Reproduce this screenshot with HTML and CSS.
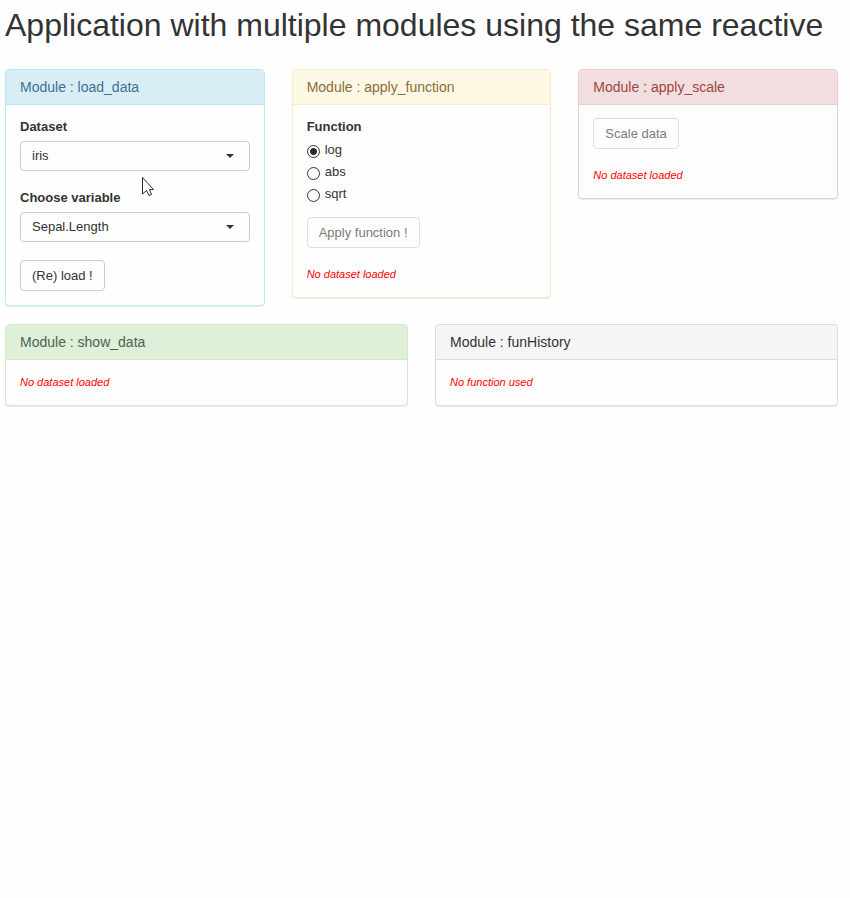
FILE: index.html
```html
<!DOCTYPE html>
<html lang="en">
<head>
<meta charset="utf-8">
<meta name="viewport" content="width=device-width, initial-scale=1">
<title>Application with multiple modules</title>
<link rel="stylesheet" href="styles.css">
</head>
<body>
<h1>Application with multiple modules using the same reactive</h1>
<main>
  <div class="row">
    <section class="panel info">
      <h2 class="panel-heading">Module : load_data</h2>
      <div class="panel-body">
        <div class="form-group">
          <label class="field-label" for="dataset">Dataset</label>
          <div class="select-wrap"><select id="dataset"><option>iris</option></select></div>
        </div>
        <div class="form-group">
          <label class="field-label" for="variable">Choose variable</label>
          <div class="select-wrap"><select id="variable"><option>Sepal.Length</option></select></div>
        </div>
        <button type="button" class="btn">(Re) load !</button>
      </div>
    </section>
    <section class="panel warning">
      <h2 class="panel-heading">Module : apply_function</h2>
      <div class="panel-body">
        <fieldset>
          <legend class="field-label">Function</legend>
          <label class="radio"><input type="radio" name="fun" checked>log</label>
          <label class="radio"><input type="radio" name="fun">abs</label>
          <label class="radio"><input type="radio" name="fun">sqrt</label>
        </fieldset>
        <button type="button" class="btn" disabled>Apply function !</button>
        <p class="status">No dataset loaded</p>
      </div>
    </section>
    <section class="panel danger">
      <h2 class="panel-heading">Module : apply_scale</h2>
      <div class="panel-body">
        <button type="button" class="btn" disabled>Scale data</button>
        <p class="status">No dataset loaded</p>
      </div>
    </section>
  </div>
  <div class="row">
    <section class="panel success">
      <h2 class="panel-heading">Module : show_data</h2>
      <div class="panel-body"><p class="status">No dataset loaded</p></div>
    </section>
    <section class="panel default">
      <h2 class="panel-heading">Module : funHistory</h2>
      <div class="panel-body"><p class="status">No function used</p></div>
    </section>
  </div>
</main>
<svg class="pointer" width="13" height="20" viewBox="0 0 13 20" aria-hidden="true">
  <path d="M0.500 0.500V17L4.500 13.500L7 18.500L9.500 17.500L7.500 12.500H11.500Z" fill="#fff" stroke="#2b2b38" stroke-linejoin="round"/>
</svg>
</body>
</html>
```
FILE: styles.css
```css
* { box-sizing: border-box; }

body {
  margin: 0;
  padding: 6px 12px 0 5px;
  background: #fefefe;
  color: #333;
  font: 13px/18px "Liberation Sans", Arial, sans-serif;
}

h1 {
  margin: 0 0 25px;
  font-size: 32px;
  line-height: 38px;
  font-weight: 400;
  white-space: nowrap;
}

.row {
  display: flex;
  align-items: flex-start;
  gap: 27px;
  margin-bottom: 18px;
}

.panel {
  flex: 1 1 0;
  min-width: 0;
  border: 1px solid var(--line);
  border-radius: 4px;
  background: #fefefe;
  box-shadow: 0 1px 1px rgba(0, 0, 0, 0.08);
}

.panel-heading {
  margin: 0;
  padding: 8px 14px;
  border-bottom: 1px solid var(--line);
  border-radius: 3px 3px 0 0;
  background: var(--fill);
  color: var(--ink);
  font-size: 14px;
  line-height: 18px;
  font-weight: 400;
}

.panel-body { padding: 13px 14px 14px; }

.info { --line: #bce8f1; --fill: #d9edf7; --ink: #41708f; }
.warning { --line: #faebcc; --fill: #fcf8e3; --ink: #8a6d3b; }
.danger { --line: #ebccd1; --fill: #f2dede; --ink: #a04442; }
.success { --line: #d6e9c6; --fill: #dff0d8; --ink: #4a6350; }
.default { --line: #ddd; --fill: #f5f5f5; --ink: #333; }

.field-label {
  display: block;
  margin-bottom: 5px;
  padding: 0;
  font-weight: 700;
}

.form-group { margin-bottom: 18px; }

.select-wrap { position: relative; }

.select-wrap::after {
  content: "";
  position: absolute;
  top: 13px;
  right: 16px;
  border: 4px solid transparent;
  border-top-color: #333;
  border-bottom: 0;
  pointer-events: none;
}

select {
  display: block;
  width: 100%;
  height: 30px;
  padding: 0 28px 0 11px;
  border: 1px solid #ccc;
  border-radius: 4px;
  background: #fefefe;
  color: #333;
  font: inherit;
  appearance: none;
}

fieldset {
  margin: 0 0 14px;
  padding: 0;
  border: 0;
}

.radio {
  display: flex;
  align-items: center;
  gap: 5px;
}

.radio + .radio { margin-top: 4px; }

.radio input {
  width: 13px;
  height: 13px;
  margin: 2px 0 0;
  border: 1px solid #33333d;
  border-radius: 50%;
  background: #fefefe;
  appearance: none;
}

.radio input:checked {
  background: radial-gradient(circle, #2b2b33 3px, #fefefe 4px);
}

.btn {
  display: block;
  height: 31px;
  padding: 0 11px;
  border: 1px solid #ccc;
  border-radius: 4px;
  background: #fefefe;
  color: #333;
  font: inherit;
}

.btn:disabled { opacity: 0.65; }

.status {
  margin: 0;
  color: #f00;
  font-size: 11px;
  font-style: italic;
}

.btn + .status { margin-top: 17px; }

.pointer {
  position: absolute;
  top: 177px;
  left: 142px;
  pointer-events: none;
}
```
